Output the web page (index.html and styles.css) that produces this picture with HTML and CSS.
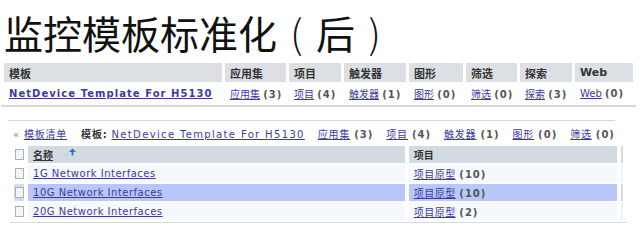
FILE: index.html
```html
<!DOCTYPE html>
<html lang="zh-CN">
<head>
    <meta charset="UTF-8">
    <title>监控模板标准化（后）</title>
    <link rel="stylesheet" href="styles.css">
</head>
<body>
    <h1>监控模板标准化<span class="paren">(</span>后<span class="paren">)</span></h1>

    <table class="summary">
        <thead>
            <tr>
                <th class="c-name">模板</th>
                <th class="c-app">应用集</th>
                <th class="c-item">项目</th>
                <th class="c-trig">触发器</th>
                <th class="c-graph">图形</th>
                <th class="c-filter">筛选</th>
                <th class="c-disc">探索</th>
                <th class="c-web">Web</th>
            </tr>
        </thead>
        <tbody>
            <tr>
                <td><a class="bold" href="#">NetDevice Template For H5130</a></td>
                <td><a href="#">应用集</a> <span class="count">(3)</span></td>
                <td><a href="#">项目</a> <span class="count">(4)</span></td>
                <td><a href="#">触发器</a> <span class="count">(1)</span></td>
                <td><a href="#">图形</a> <span class="count">(0)</span></td>
                <td><a href="#">筛选</a> <span class="count">(0)</span></td>
                <td><a href="#">探索</a> <span class="count">(3)</span></td>
                <td><a href="#">Web</a> <span class="count">(0)</span></td>
            </tr>
        </tbody>
    </table>

    <div class="detail">
        <div class="crumbs">
            <span class="back">« <a href="#">模板清单</a></span>
            <span class="tpl"><b>模板:</b> <a class="wide" href="#">NetDevice Template For H5130</a></span>
            <span><a href="#">应用集</a> <span class="count">(3)</span></span>
            <span><a href="#">项目</a> <span class="count">(4)</span></span>
            <span><a href="#">触发器</a> <span class="count">(1)</span></span>
            <span><a href="#">图形</a> <span class="count">(0)</span></span>
            <span><a href="#">筛选</a> <span class="count">(0)</span></span>
        </div>

        <table class="list">
            <thead>
                <tr>
                    <th class="chk"><span class="box"></span></th>
                    <th class="l-name">
                        <span class="ul">名称</span>
                        <svg class="sort" width="14" height="9" viewBox="0 0 14 9">
                            <path d="M1 8 L3 5 L5 8 Z" fill="#c4cbd2"/>
                            <path d="M6 4 L9.5 0.5 L13 4 Z" fill="#2f6fd0"/>
                            <rect x="8.6" y="3.5" width="1.8" height="4" fill="#2f6fd0"/>
                        </svg>
                    </th>
                    <th class="l-proto">项目</th>
                    <th class="l-edge"></th>
                </tr>
            </thead>
            <tbody>
                <tr>
                    <td class="chk"><span class="box"></span></td>
                    <td><a href="#">1G Network Interfaces</a></td>
                    <td><a href="#">项目原型</a> <span class="count">(10)</span></td>
                    <td class="l-edge"></td>
                </tr>
                <tr class="selected">
                    <td class="chk"><span class="box"></span></td>
                    <td><a href="#">10G Network Interfaces</a></td>
                    <td><a href="#">项目原型</a> <span class="count">(10)</span></td>
                    <td class="l-edge"></td>
                </tr>
                <tr>
                    <td class="chk"><span class="box"></span></td>
                    <td><a href="#">20G Network Interfaces</a></td>
                    <td><a href="#">项目原型</a> <span class="count">(2)</span></td>
                    <td class="l-edge"></td>
                </tr>
            </tbody>
        </table>
    </div>
</body>
</html>
```

FILE: styles.css
```css
body {
    margin: 0;
    width: 640px;
    background-color: #fff;
    color: #222;
    font-family: 'DejaVu Sans', 'Noto Sans CJK SC', sans-serif;
    font-size: 10px;
}

h1 {
    margin: 0;
    padding: 7px 0 0 4px;
    height: 61px;
    box-sizing: border-box;
    font-family: 'Noto Sans CJK SC', sans-serif;
    font-weight: 400;
    font-size: 39px;
    line-height: 50px;
    color: #111;
    white-space: nowrap;
}

/* full-width brackets with the glyph centred in its box */
h1 .paren {
    display: inline-block;
    width: 39px;
    text-align: center;
    font-weight: 300;
}

a {
    color: #3d3a9e;
    text-decoration: underline;
}

.count {
    color: #555;
    font-weight: bold;
    letter-spacing: 1px;
}

/* upper summary table */
.summary {
    margin-left: 1px;
    width: 632px;
    border-spacing: 3px 2px;
    border-bottom: 2px solid #d6d9dd;
    table-layout: fixed;
}

.summary th {
    height: 19px;
    padding: 0 5px;
    background-color: #dce0e5;
    color: #333;
    font-size: 11px;
    font-weight: bold;
    text-align: left;
}

.summary td {
    height: 19px;
    padding: 0 5px;
    white-space: nowrap;
    font-size: 10px;
}

.summary .bold {
    font-weight: bold;
    letter-spacing: 1.05px;
}

.c-name { width: 208px; }
.c-app { width: 51px; }
.c-item { width: 42px; }
.c-trig { width: 52px; }
.c-graph { width: 44px; }
.c-filter { width: 41px; }
.c-disc { width: 42px; }
.c-web { width: 48px; }

/* lower detail block */
.detail {
    margin: 13px 8px 0 8px;
}

.crumbs {
    display: flex;
    align-items: center;
    gap: 13px;
    width: 602px;
    height: 20px;
    padding: 2px 0 0 5px;
    border-top: 1px solid #d6d9dd;
    white-space: nowrap;
    letter-spacing: 0.8px;
}

.crumbs > span {
    flex-shrink: 0;
}

.crumbs .back {
    color: #888;
    margin-right: 1px;
}

.crumbs b {
    color: #333;
}

.crumbs .wide {
    letter-spacing: 1.35px;
}

.list {
    margin: 1px 0 0 2px;
    width: 617px;
    border-spacing: 4px 2px;
    border-bottom: 1px solid #d6d9dd;
    table-layout: fixed;
}

.list th {
    height: 17px;
    padding: 0 5px;
    background-color: #d3dbe2;
    text-align: left;
    font-weight: bold;
    color: #333;
}

.list td {
    height: 17px;
    padding: 0 5px;
    background-color: #f5f8fc;
    white-space: nowrap;
    letter-spacing: 0.5px;
}

.list .chk {
    width: 8px;
    padding: 0 1px;
    background: none;
}

.list .l-name { width: 366px; }
.list .l-proto { width: 198px; }

.list .l-edge {
    width: 2px;
    padding: 0;
    background-color: #eef1f5;
}

.list th.l-edge {
    background-color: #d3dbe2;
}

.list .selected td {
    background-color: #b7c7f8;
}

.list .selected td.chk {
    background-color: #d3ddf9;
}

.list .selected .l-edge {
    background-color: #d0d9f5;
}

.box {
    display: inline-block;
    width: 7px;
    height: 9px;
    border: 1px solid #a9b0b8;
    background-color: #f4f4f4;
    vertical-align: middle;
}

.ul {
    text-decoration: underline;
}

.sort {
    margin-left: 6px;
    vertical-align: top;
    margin-top: 1px;
}
```
